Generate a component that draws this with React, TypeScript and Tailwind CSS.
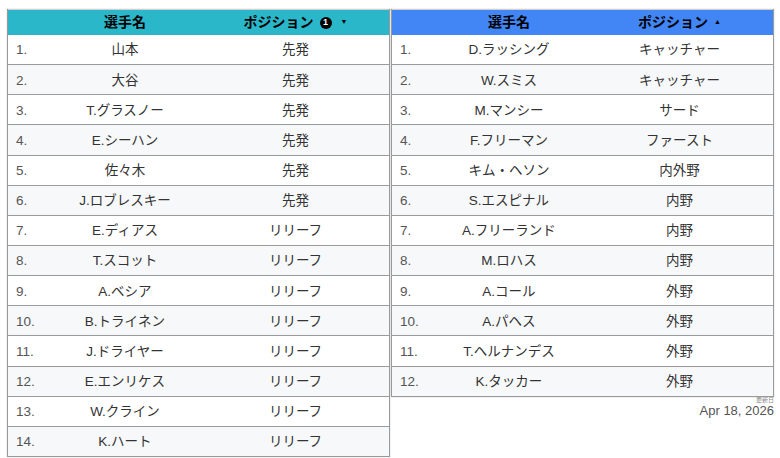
import React from "react";

const left = [
  ["山本", "先発"],
  ["大谷", "先発"],
  ["T.グラスノー", "先発"],
  ["E.シーハン", "先発"],
  ["佐々木", "先発"],
  ["J.ロブレスキー", "先発"],
  ["E.ディアス", "リリーフ"],
  ["T.スコット", "リリーフ"],
  ["A.ベシア", "リリーフ"],
  ["B.トライネン", "リリーフ"],
  ["J.ドライヤー", "リリーフ"],
  ["E.エンリケス", "リリーフ"],
  ["W.クライン", "リリーフ"],
  ["K.ハート", "リリーフ"],
];

const right = [
  ["D.ラッシング", "キャッチャー"],
  ["W.スミス", "キャッチャー"],
  ["M.マンシー", "サード"],
  ["F.フリーマン", "ファースト"],
  ["キム・ヘソン", "内外野"],
  ["S.エスピナル", "内野"],
  ["A.フリーランド", "内野"],
  ["M.ロハス", "内野"],
  ["A.コール", "外野"],
  ["A.パヘス", "外野"],
  ["T.ヘルナンデス", "外野"],
  ["K.タッカー", "外野"],
];

const font = { fontFamily: '"Liberation Sans", "Noto Sans CJK JP", sans-serif' };

function Table({
  rows,
  headerBg,
  sort,
}: {
  rows: string[][];
  headerBg: string;
  sort: "down" | "up";
}) {
  return (
    <div className="w-[383px] border-x border-[#9a9a9a] shadow-[0_0_1px_rgba(0,0,0,0.3)]">
      <div
        className={`grid h-[26px] grid-cols-[40px_154px_1fr] items-center border-t border-[#cfcfcf] text-[14px] font-bold text-black ${headerBg}`}
      >
        <div />
        <div className="text-center">選手名</div>
        <div className="flex items-center justify-center gap-[6px]">
          <span>ポジション</span>
          {sort === "down" ? (
            <>
              <span className="flex h-[12px] w-[12px] items-center justify-center rounded-full bg-black text-[9px] leading-none text-white">
                1
              </span>
              <span className="ml-[3px] text-[7px]">▼</span>
            </>
          ) : (
            <span className="text-[7px]">▲</span>
          )}
        </div>
      </div>
      {rows.map(([name, pos], i) => (
        <div
          key={i}
          className={`grid h-[30.15px] grid-cols-[40px_154px_1fr] items-center border-b border-[#9a9a9a] pt-[2px] text-[13.5px] text-[#333] ${
            i % 2 === 1 ? "bg-[#f7f8fa]" : "bg-white"
          }`}
        >
          <div className="pl-[8px] text-[#555]">{i + 1}.</div>
          <div className="text-center">{name}</div>
          <div className="text-center">{pos}</div>
        </div>
      ))}
    </div>
  );
}

export default function App() {
  return (
    <div className="h-[458px] w-[780px] bg-white pl-[7px] pt-[9px]" style={font}>
      <div className="flex items-start gap-[1px]">
        <Table rows={left} headerBg="bg-[#2bb7ca]" sort="down" />
        <div className="flex flex-col items-end">
          <Table rows={right} headerBg="bg-[#4285f4]" sort="up" />
          <div className="text-[6px] leading-[7px] text-[#888]">更新日</div>
          <div className="text-[13px] leading-[13px] text-[#555]">Apr 18, 2026</div>
        </div>
      </div>
    </div>
  );
}
